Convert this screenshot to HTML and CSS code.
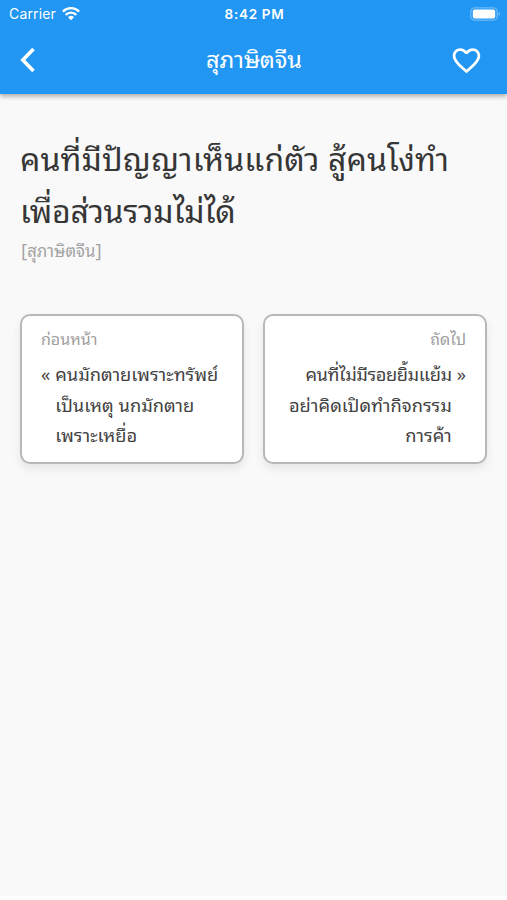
FILE: index.html
```html
<!DOCTYPE html>
<html lang="th">
<head>
  <meta charset="UTF-8" />
  <meta name="viewport" content="width=device-width, initial-scale=1.0" />
  <title>สุภาษิตจีน</title>
  <link rel="stylesheet" href="styles.css">
</head>
<body>
  <header class="top">
    <div class="status">
      <div class="carrier">
        <span>Carrier</span>
        <svg class="wifi" viewBox="0 0 18 14" width="18" height="14">
          <path d="M.9 4.6a11.4 11.4 0 0 1 16.2 0M3.7 7.9a7.5 7.5 0 0 1 10.6 0" fill="none" stroke="#fff" stroke-width="2.3"/>
          <path d="M9 13.2 6 10.2a4.3 4.3 0 0 1 6 0z" fill="#fff"/>
        </svg>
      </div>
      <div class="time">8:42 PM</div>
      <div class="battery">
        <svg viewBox="0 0 31 14" width="31" height="14">
          <rect x=".8" y=".8" width="26.4" height="12.4" rx="4" fill="none" stroke="#fff" stroke-opacity=".35" stroke-width="1.3"/>
          <rect x="2.8" y="2.5" width="22.4" height="9" rx="2" fill="#fff"/>
          <path d="M28.6 5v4q1.5-.6 1.5-2t-1.5-2z" fill="#fff" fill-opacity=".4"/>
        </svg>
      </div>
    </div>
    <nav class="navbar">
      <svg class="back" viewBox="0 0 16 26" width="16" height="26">
        <path d="M13.5 2 2.8 13l10.7 11" fill="none" stroke="#fff" stroke-width="3.6"/>
      </svg>
      <h1>สุภาษิตจีน</h1>
      <svg class="heart" viewBox="0 0 24 24" width="33" height="33">
        <path fill="#fff" d="M16.5 3c-1.74 0-3.41.81-4.5 2.09C10.91 3.81 9.24 3 7.5 3 4.42 3 2 5.42 2 8.5c0 3.78 3.4 6.86 8.55 11.54L12 21.35l1.45-1.32C18.6 15.36 22 12.28 22 8.5 22 5.42 19.58 3 16.5 3zm-4.4 15.55l-.1.1-.1-.1C7.14 14.24 4 11.39 4 8.5 4 6.5 5.5 5 7.5 5c1.54 0 3.04.99 3.57 2.36h1.87C13.46 5.99 14.96 5 16.5 5c2 0 3.5 1.5 3.5 3.5 0 2.89-3.14 5.74-7.9 10.05z"/>
      </svg>
    </nav>
  </header>

  <main class="content">
    <p class="quote"><span class="line first">คนที่มีปัญญาเห็นแก่ตัว สู้คนโง่ทำ</span><span class="line">เพื่อส่วนรวมไม่ได้</span></p>
    <p class="source"><span class="bracket">[</span>สุภาษิตจีน<span class="bracket">]</span></p>

    <div class="cards">
      <a class="card prev">
        <span class="label">ก่อนหน้า</span>
        <span class="row">
          <span class="mark">«</span>
          <span class="text">คนมักตายเพราะทรัพย์<br>เป็นเหตุ นกมักตาย<br>เพราะเหยื่อ</span>
        </span>
      </a>
      <a class="card next">
        <span class="label">ถัดไป</span>
        <span class="row">
          <span class="text"><span class="tight">คนที่ไม่มีรอยยิ้มแย้ม</span><br>อย่าคิดเปิดทำกิจกรรม<br>การค้า</span>
          <span class="mark">»</span>
        </span>
      </a>
    </div>
  </main>
</body>
</html>
```

FILE: styles.css
```css
* {
  box-sizing: border-box;
}
html {
  background-color: #fff;
}
body {
  margin: 0;
  height: 896px;
  background-color: #f9f9f9;
  color: #363636;
  font-family: "Noto Sans Thai Looped", "Noto Looped Thai", Loma, Garuda, Waree, "Noto Sans", sans-serif;
}
.top {
  height: 94px;
  background-color: #2196f3;
  color: #fff;
  box-shadow: 0 2px 5px rgba(0, 0, 0, 0.35);
}
.status {
  display: grid;
  grid-template-columns: 1fr auto 1fr;
  align-items: center;
  height: 27px;
  padding: 0 6px 0 9px;
  font-family: Inter, "Liberation Sans", sans-serif;
  font-size: 14px;
}
.carrier {
  display: flex;
  align-items: center;
  gap: 6px;
  letter-spacing: 0.15px;
}
.time {
  margin-right: 1px;
  font-size: 13.5px;
  font-weight: 600;
  letter-spacing: 0.7px;
}
.battery {
  display: flex;
  justify-content: flex-end;
}
.navbar {
  display: grid;
  grid-template-columns: 40px 1fr 40px;
  align-items: center;
  height: 66px;
  padding: 0 24px 0 20px;
}
.navbar h1 {
  margin: 0;
  padding: 0 0 5px 5px;
  text-align: center;
  font-size: 23.5px;
  font-weight: 400;
}
.heart {
  justify-self: end;
}
.content {
  padding: 37px 20px 0;
}
.quote {
  margin: 0;
  font-size: 32px;
  line-height: 52px;
}
.line {
  display: block;
  letter-spacing: -0.3px;
  white-space: nowrap;
}
.first {
  letter-spacing: 0.13px;
}
.source {
  display: flex;
  align-items: center;
  height: 22px;
  margin: 4px 0 0;
  padding-left: 1px;
  color: #a3a3a3;
  font-size: 16.7px;
  line-height: 22px;
}
.bracket {
  font-family: "Open Sans", "Noto Sans", sans-serif;
  font-size: 19px;
}
.cards {
  display: grid;
  grid-template-columns: repeat(2, minmax(0, 1fr));
  gap: 19px;
  margin-top: 53px;
}
.card {
  height: 150px;
  padding: 8px 19px;
  border: 2px solid #b8b8b8;
  border-radius: 10px;
  background-color: #fff;
  box-shadow: 0 5px 10px rgba(0, 0, 0, 0.08);
  white-space: nowrap;
}
.label {
  display: block;
  color: #9e9e9e;
  font-size: 16px;
  line-height: 28px;
}
.row {
  display: flex;
  gap: 5px;
  margin-top: 6px;
  color: #424242;
  font-size: 18.3px;
  line-height: 30.7px;
}
.next {
  text-align: right;
}
.next .row {
  justify-content: flex-end;
}
.tight {
  letter-spacing: -0.42px;
}
```
